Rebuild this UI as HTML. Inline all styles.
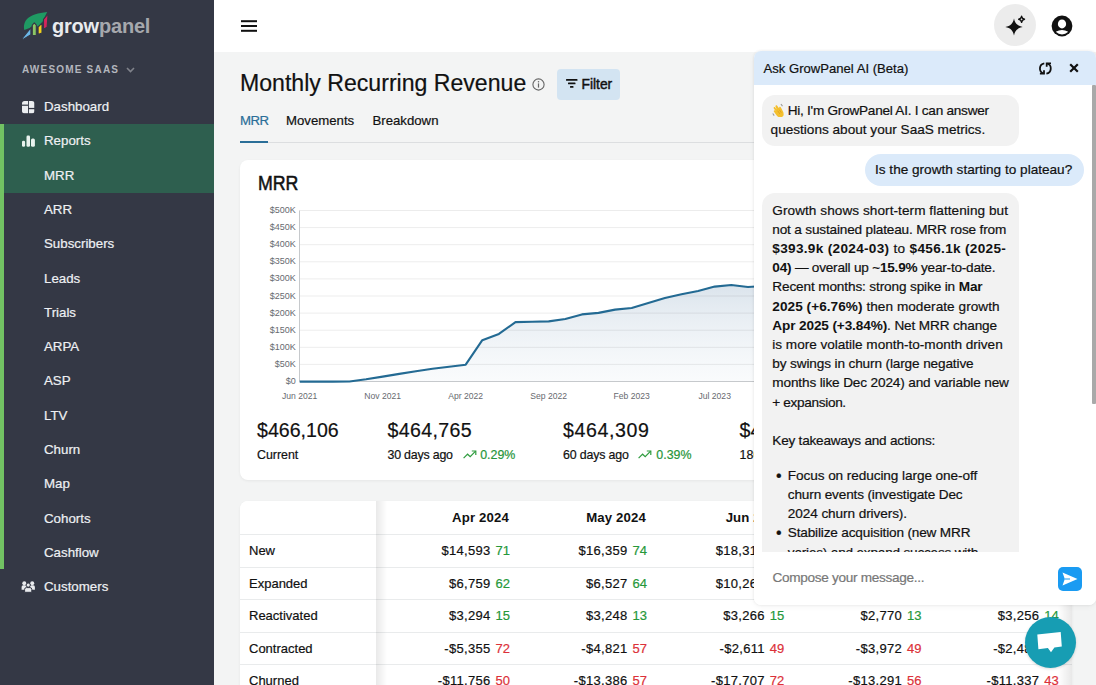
<!DOCTYPE html>
<html><head><meta charset="utf-8">
<style>
*{box-sizing:border-box;margin:0;padding:0}
body *{-webkit-text-stroke:0.2px currentColor}
b,.tbl .hd,#side .brand,#side .brand span,#side .org{-webkit-text-stroke:0}
html,body{width:1096px;height:685px;overflow:hidden;background:#f3f4f4;font-family:"Liberation Sans",sans-serif;color:#111}
.abs{position:absolute}
#side{position:absolute;left:0;top:0;width:214px;height:685px;background:#343845}
#side .logo{position:absolute;left:18px;top:8px}
#side .brand{position:absolute;left:52px;top:14.5px;font-size:20px;font-weight:bold;letter-spacing:-0.2px;color:#e9ebee}
#side .brand span{color:#a6a8ad}
#side .org{position:absolute;left:22px;top:63.5px;font-size:10px;font-weight:bold;letter-spacing:1.2px;color:#b3b6bd;width:180px}
#side .org svg{position:absolute;left:103.5px;top:3px}
.nav{position:absolute;left:0;width:214px;height:34.3px;font-size:13.3px;color:#eef0f3;line-height:34.3px}
.nav .t{position:absolute;left:44px;top:0}
.nav svg{position:absolute;left:22px;top:11px}
.nav.g{background:#2e5f4f}
#bar{position:absolute;left:0;top:124px;width:4px;height:445px;background:#72c263}
#hdr{position:absolute;left:214px;top:0;width:882px;height:52px;background:#fff}

#hdr .ham{position:absolute;left:26.5px;top:20px}
#hdr .spark{position:absolute;left:779.5px;top:4px;width:42px;height:42px;border-radius:50%;background:#ececec}
#hdr .spark svg{position:absolute;left:0;top:0}
#hdr .av{position:absolute;left:836.5px;top:14.5px}
.title{position:absolute;left:240px;top:70px;font-size:23.1px;color:#111;white-space:nowrap}
.info{position:absolute;left:531.5px;top:78px}
.filter{position:absolute;left:557px;top:69px;width:63px;height:31px;border-radius:4px;background:#d3e4f2;font-size:13.8px;color:#111}
.filter svg{position:absolute;left:8.5px;top:10px}
.filter span{position:absolute;left:24.5px;top:7.5px;-webkit-text-stroke:0.45px #111}
.tabs{position:absolute;left:240px;top:142px;width:832px;height:1.3px;background:#dcdee0}
.tab{position:absolute;top:113px;font-size:13.2px;color:#111;white-space:nowrap}
.tabline{position:absolute;left:240px;top:140.6px;width:28.3px;height:2.6px;background:#2a6e98}
.card{position:absolute;background:#fff;border-radius:8px;box-shadow:0 1px 3px rgba(0,0,0,0.06)}

.ctitle{position:absolute;left:258px;top:172.3px;font-size:19.5px;color:#111;-webkit-text-stroke:0.5px #111;transform:scaleX(0.91);transform-origin:0 0}
.stat{position:absolute;white-space:nowrap}
.stat .v{position:absolute;left:0;top:0;font-size:19.6px;color:#111}
.stat .l{position:absolute;left:0;top:28.5px;font-size:12.4px;color:#111}
.stat .p{position:absolute;top:28.5px;font-size:12.4px;color:#27963a}
.stat svg{position:absolute;top:28px}

.tbl{position:absolute;left:240px;top:501px;width:832px;height:200px;background:#fff;border-radius:8px;overflow:hidden;box-shadow:0 1px 3px rgba(0,0,0,0.06)}
.tbl .rl{position:absolute;left:0;width:832px;height:1px;background:#e9ebec}
.tbl .lab{position:absolute;left:9px;font-size:13px;color:#111}
.tbl .hd{position:absolute;font-size:13.2px;font-weight:bold;color:#111;text-align:right;width:120px;letter-spacing:0.15px}
.tbl .cell{position:absolute;width:130px;text-align:right;font-size:13px;color:#111;white-space:nowrap;letter-spacing:0.3px}
.tbl .cell span{margin-left:5px;letter-spacing:0}
.tbl .num{position:absolute;font-size:13px;color:#111;text-align:right;width:100px}
.tbl .cnt{position:absolute;font-size:13px;text-align:right;width:30px}
.tbl .sticky{position:absolute;left:0;top:0;width:136px;height:200px;background:#fff}
.tbl .shd{position:absolute;left:136px;top:0;width:11px;height:200px;background:linear-gradient(to right,rgba(0,0,0,0.085),rgba(0,0,0,0))}
.tbl .rshd{position:absolute;left:818px;top:0;width:14px;height:200px;background:linear-gradient(to left,rgba(0,0,0,0.09),rgba(0,0,0,0))}
.G{color:#26983a}.R{color:#dc3139}

#chat{position:absolute;left:753.5px;top:51px;width:342.5px;height:554px;background:#fff;border-radius:7px;box-shadow:0 0 3px rgba(0,0,0,0.09),0 2px 6px rgba(0,0,0,0.04);overflow:hidden}
#chat .hd{position:absolute;left:0;top:0;width:342px;height:34px;background:#dbeafa}
#chat .hd .t{position:absolute;left:10px;top:9.5px;font-size:13.1px;color:#111}
#chat .msgs{position:absolute;left:0;top:34px;width:342px;height:467px;overflow:hidden}
#chat .sb{position:absolute;left:338.5px;top:34px;width:3.5px;height:319px;background:#a9a9a9;border-radius:1px}
.bub{position:absolute;background:#f2f2f2;border-radius:13px;font-size:13.6px;line-height:19.2px;color:#111}
.bub b{font-weight:bold}
#chat .inp{position:absolute;left:0;top:501px;width:342px;height:53px;background:#fff}
#chat .inp .ph{position:absolute;left:19px;top:17.5px;font-size:13.6px;color:#777;letter-spacing:-0.3px}
#chat .send{position:absolute;left:304px;top:14.6px;width:24px;height:24.5px;border-radius:5px;background:#1a9bf2}
#fab{position:absolute;left:1024.5px;top:616.6px;width:51.2px;height:51.2px;border-radius:50%;background:#179db3;box-shadow:0 1px 3px rgba(0,0,0,0.15)}
</style></head><body>
<div id="side">
  <svg class="logo" width="40" height="36" viewBox="0 0 40 36">
    <path d="M6.3,22 C4.6,12.5 10.5,5.8 29.2,4 L25.5,11.3 L24,15 L20.1,19 L18.3,17.1 L16.3,14.8 L14.3,17.1 L12.9,19.6 Z" fill="#1f9a63"/>
    <g stroke="#343845" stroke-width="1.1" stroke-linejoin="round">
    <path d="M3.8,30.8 L12.9,19.6 L12.9,26.7 L5,31.4 Z" fill="#6cb8e8"/>
    <path d="M14.3,17.1 L16.3,14.8 L18.3,17.1 L18.3,27.5 L14.3,27.5 Z" fill="#8cc665"/>
    <path d="M20.1,19 L24,15 L24,24.9 L20.1,26.5 Z" fill="#f2d21b"/>
    <path d="M25.5,11.3 L30.1,6 L29.1,19.2 L25.5,21.2 Z" fill="#d6245e"/>
    </g>
  </svg>
  <div class="brand">grow<span>panel</span></div>
  <div class="org">AWESOME SAAS<svg width="9" height="6" viewBox="0 0 9 6"><path d="M1,1 L4.5,4.5 L8,1" stroke="#80838b" stroke-width="1.6" fill="none"/></svg></div>
    <div class="nav" style="top:90.0px"><svg style="left:21.9px;top:10.8px" width="13" height="13" viewBox="0 0 13 13"><defs><clipPath id="dbc"><rect x="0" y="0" width="12.5" height="12.4" rx="2.6"/></clipPath></defs><g clip-path="url(#dbc)" fill="#eceef1"><rect x="0" y="0" width="6" height="3.6"/><rect x="0" y="4.8" width="6" height="7.6"/><rect x="6.9" y="0" width="5.6" height="6.9"/><rect x="6.9" y="8.2" width="5.6" height="4.2"/></g></svg><span class="t">Dashboard</span></div>
  <div class="nav g" style="top:124.3px"><svg width="13" height="13" viewBox="0 0 13 13"><rect x="0" y="5.8" width="3.1" height="6" rx="1.3" fill="#e9f2ee"/><rect x="4.5" y="0.6" width="3.5" height="11.2" rx="1.3" fill="#e9f2ee"/><rect x="9" y="3.6" width="3.9" height="8.2" rx="1.5" fill="#e9f2ee"/></svg><span class="t">Reports</span></div>
  <div class="nav g" style="top:158.6px"><span class="t">MRR</span></div>
  <div class="nav" style="top:192.9px"><span class="t">ARR</span></div>
  <div class="nav" style="top:227.2px"><span class="t">Subscribers</span></div>
  <div class="nav" style="top:261.5px"><span class="t">Leads</span></div>
  <div class="nav" style="top:295.8px"><span class="t">Trials</span></div>
  <div class="nav" style="top:330.1px"><span class="t">ARPA</span></div>
  <div class="nav" style="top:364.4px"><span class="t">ASP</span></div>
  <div class="nav" style="top:398.7px"><span class="t">LTV</span></div>
  <div class="nav" style="top:433.0px"><span class="t">Churn</span></div>
  <div class="nav" style="top:467.3px"><span class="t">Map</span></div>
  <div class="nav" style="top:501.6px"><span class="t">Cohorts</span></div>
  <div class="nav" style="top:535.9px"><span class="t">Cashflow</span></div>
  <div class="nav" style="top:570.2px"><svg style="left:21px;top:11px" width="16" height="13" viewBox="0 0 16 13"><g fill="#e9ebee"><circle cx="3.3" cy="2.2" r="2"/><path d="M0.6,8.7 L0.6,6 Q0.6,4.3 2.3,4.3 L4.4,4.3 Q6,4.3 6,6 L6,8.7 Z"/><circle cx="11.2" cy="2.2" r="2"/><path d="M8.6,8.7 L8.6,6 Q8.6,4.3 10.2,4.3 L12.3,4.3 Q13.9,4.3 13.9,6 L13.9,8.7 Z"/></g><g fill="#e9ebee" stroke="#343845" stroke-width="1"><circle cx="7.2" cy="4.1" r="2.1"/><path d="M3.6,11.3 L3.6,8.4 Q3.6,6.6 5.4,6.6 L9,6.6 Q10.8,6.6 10.8,8.4 L10.8,11.3 Z"/></g></svg><span class="t">Customers</span></div>
  <div id="bar"></div>
</div>
<div id="hdr">
  <svg class="ham" width="16" height="12" viewBox="0 0 16 12"><rect x="0" y="0.2" width="16" height="2" fill="#111"/><rect x="0" y="5" width="16" height="2" fill="#111"/><rect x="0" y="9.8" width="16" height="2" fill="#111"/></svg>
  <div class="spark"><svg width="42" height="42" viewBox="0 0 42 42"><path d="M20,14.4 C21,19.2 23.4,21.9 28.7,22.9 C23.4,23.9 21,26.6 20,31.4 C19,26.6 16.6,23.9 11.3,22.9 C16.6,21.9 19,19.2 20,14.4 Z" fill="#111"/><path d="M27.6,12.3 C27.9,14.1 28.5,14.8 30.5,15.3 C28.5,15.8 27.9,16.5 27.6,18.3 C27.3,16.5 26.7,15.8 24.7,15.3 C26.7,14.8 27.3,14.1 27.6,12.3 Z" fill="none" stroke="#111" stroke-width="1.4" stroke-linejoin="round"/></svg></div>
  <svg class="av" width="22" height="22" viewBox="0 0 22 22"><defs><clipPath id="avc"><circle cx="11" cy="11" r="8.4"/></clipPath></defs><circle cx="11" cy="11" r="10.4" fill="#111"/><g clip-path="url(#avc)"><ellipse cx="11" cy="8.9" rx="4.1" ry="4.5" fill="#fff"/><ellipse cx="11" cy="20.2" rx="8" ry="5.2" fill="#fff"/></g></svg>
</div>
<div class="title">Monthly Recurring Revenue</div>
<svg class="info" width="13" height="13" viewBox="0 0 13 13"><circle cx="6.5" cy="6.5" r="5.6" fill="none" stroke="#666" stroke-width="1.1"/><rect x="5.9" y="5.4" width="1.2" height="4.2" fill="#666"/><circle cx="6.5" cy="3.8" r="0.75" fill="#666"/></svg>
<div class="filter"><svg width="12" height="9" viewBox="0 0 12 9"><rect x="0" y="0" width="11.5" height="1.8" rx="0.6" fill="#111"/><rect x="2" y="3.5" width="7.5" height="1.8" rx="0.6" fill="#111"/><rect x="4" y="7" width="3.5" height="1.8" rx="0.6" fill="#111"/></svg><span>Filter</span></div>
<div class="tabs"></div>
<div class="tab" style="left:240px;color:#2a6e98;letter-spacing:-0.55px">MRR</div>
<div class="tab" style="left:286px">Movements</div>
<div class="tab" style="left:372.5px">Breakdown</div>
<div class="tabline"></div>
<div class="card" style="left:240px;top:160px;width:832px;height:320px"></div>
<div class="ctitle">MRR</div>
<svg class="abs" style="left:0;top:0" width="1096" height="685" viewBox="0 0 1096 685">
<defs><linearGradient id="ag" x1="0" y1="0" x2="0" y2="1"><stop offset="0" stop-color="#cbd8e4" stop-opacity="0.75"/><stop offset="1" stop-color="#edf2f6" stop-opacity="0.3"/></linearGradient>
<clipPath id="cc"><rect x="240" y="160" width="832" height="320"/></clipPath></defs>
<g clip-path="url(#cc)">
<path d="M299.7,382.1 L316.3,381.9 L332.9,381.7 L349.5,381.5 L366.1,379.3 L382.7,376.6 L399.3,373.9 L415.9,371.3 L432.5,368.7 L449.1,366.7 L465.7,364.7 L482.3,340.2 L498.9,333.9 L515.5,322.1 L532.1,321.8 L548.7,321.4 L565.3,319.0 L581.9,314.4 L598.5,312.9 L615.1,309.6 L631.7,308.0 L648.3,303.0 L664.9,298.0 L681.5,294.3 L698.1,291.0 L714.7,286.6 L731.3,285.0 L747.9,287.0 L764.5,285.9 L781.1,283.8 L797.7,281.3 L814.3,278.3 L814.3,381.5 L299.7,381.5 Z" fill="url(#ag)"/>
<line x1="299.5" y1="381.50" x2="1060" y2="381.50" stroke="#c6c9cc" stroke-width="1.2"/><line x1="299.5" y1="364.40" x2="1060" y2="364.40" stroke="rgba(0,0,0,0.075)" stroke-width="1"/><line x1="299.5" y1="347.30" x2="1060" y2="347.30" stroke="rgba(0,0,0,0.075)" stroke-width="1"/><line x1="299.5" y1="330.20" x2="1060" y2="330.20" stroke="rgba(0,0,0,0.075)" stroke-width="1"/><line x1="299.5" y1="313.10" x2="1060" y2="313.10" stroke="rgba(0,0,0,0.075)" stroke-width="1"/><line x1="299.5" y1="296.00" x2="1060" y2="296.00" stroke="rgba(0,0,0,0.075)" stroke-width="1"/><line x1="299.5" y1="278.90" x2="1060" y2="278.90" stroke="rgba(0,0,0,0.075)" stroke-width="1"/><line x1="299.5" y1="261.80" x2="1060" y2="261.80" stroke="rgba(0,0,0,0.075)" stroke-width="1"/><line x1="299.5" y1="244.70" x2="1060" y2="244.70" stroke="rgba(0,0,0,0.075)" stroke-width="1"/><line x1="299.5" y1="227.60" x2="1060" y2="227.60" stroke="rgba(0,0,0,0.075)" stroke-width="1"/><line x1="299.5" y1="210.50" x2="1060" y2="210.50" stroke="rgba(0,0,0,0.075)" stroke-width="1"/>
<line x1="299.5" y1="210.5" x2="299.5" y2="381.5" stroke="#c6c9cc" stroke-width="1"/>
<polyline points="299.7,381.6 316.3,381.6 332.9,381.6 349.5,381.5 366.1,379.3 382.7,376.6 399.3,373.9 415.9,371.3 432.5,368.7 449.1,366.7 465.7,364.7 482.3,340.2 498.9,333.9 515.5,322.1 532.1,321.8 548.7,321.4 565.3,319.0 581.9,314.4 598.5,312.9 615.1,309.6 631.7,308.0 648.3,303.0 664.9,298.0 681.5,294.3 698.1,291.0 714.7,286.6 731.3,285.0 747.9,287.0 764.5,285.9 781.1,283.8 797.7,281.3 814.3,278.3" fill="none" stroke="#236a93" stroke-width="2.1" stroke-linejoin="round"/>
<g font-family="Liberation Sans" font-size="8.6" fill="#676a6f"><text x="295.8" y="384.00" text-anchor="end" font-size="9">$0</text><text x="295.8" y="366.90" text-anchor="end" font-size="9">$50K</text><text x="295.8" y="349.80" text-anchor="end" font-size="9">$100K</text><text x="295.8" y="332.70" text-anchor="end" font-size="9">$150K</text><text x="295.8" y="315.60" text-anchor="end" font-size="9">$200K</text><text x="295.8" y="298.50" text-anchor="end" font-size="9">$250K</text><text x="295.8" y="281.40" text-anchor="end" font-size="9">$300K</text><text x="295.8" y="264.30" text-anchor="end" font-size="9">$350K</text><text x="295.8" y="247.20" text-anchor="end" font-size="9">$400K</text><text x="295.8" y="230.10" text-anchor="end" font-size="9">$450K</text><text x="295.8" y="213.00" text-anchor="end" font-size="9">$500K</text><text x="299.7" y="399.2" text-anchor="middle">Jun 2021</text><text x="382.7" y="399.2" text-anchor="middle">Nov 2021</text><text x="465.7" y="399.2" text-anchor="middle">Apr 2022</text><text x="548.7" y="399.2" text-anchor="middle">Sep 2022</text><text x="631.7" y="399.2" text-anchor="middle">Feb 2023</text><text x="714.7" y="399.2" text-anchor="middle">Jul 2023</text><text x="797.7" y="399.2" text-anchor="middle">Dec 2023</text></g>
</g></svg>
<div class="stat" style="left:257px;top:419px"><div class="v">$466,106</div><div class="l">Current</div></div>
<div class="stat" style="left:387.5px;top:419px"><div class="v" style="letter-spacing:0.33px">$464,765</div><div class="l" style="letter-spacing:-0.2px">30 days ago</div><span style="position:absolute;left:75px;top:0"><svg style="position:absolute;left:0;top:30.5px" width="14" height="9" viewBox="0 0 14 9"><polyline points="0.6,8.2 4.6,4.2 7.2,6.6 12.6,1.2" fill="none" stroke="#2e9c3e" stroke-width="1.2"/><polyline points="8.8,1 12.8,1 12.8,5" fill="none" stroke="#2e9c3e" stroke-width="1.2"/></svg></span><div class="p" style="left:92.7px">0.29%</div></div>
<div class="stat" style="left:563px;top:419px"><div class="v" style="letter-spacing:0.58px">$464,309</div><div class="l" style="letter-spacing:-0.17px">60 days ago</div><span style="position:absolute;left:75px;top:0"><svg style="position:absolute;left:0;top:30.5px" width="14" height="9" viewBox="0 0 14 9"><polyline points="0.6,8.2 4.6,4.2 7.2,6.6 12.6,1.2" fill="none" stroke="#2e9c3e" stroke-width="1.2"/><polyline points="8.8,1 12.8,1 12.8,5" fill="none" stroke="#2e9c3e" stroke-width="1.2"/></svg></span><div class="p" style="left:93.3px">0.39%</div></div>
<div class="stat" style="left:739.6px;top:419px"><div class="v">$464,200</div><div class="l">180 days ago</div></div>
<div class="tbl">
<div class="rl" style="top:32.9px"></div>
<div class="rl" style="top:66.0px"></div>
<div class="rl" style="top:98.3px"></div>
<div class="rl" style="top:130.8px"></div>
<div class="rl" style="top:163.3px"></div>
<div class="hd" style="left:149.0px;top:9.0px">Apr 2024</div>
<div class="hd" style="left:286.0px;top:9.0px">May 2024</div>
<div class="hd" style="left:423.3px;top:9.0px">Jun 2024</div>
<div class="hd" style="left:560.5px;top:9.0px">Jul 2024</div>
<div class="hd" style="left:697.8px;top:9.0px">Aug 2024</div>
<div class="cell" style="left:140.0px;top:41.7px">$14,593<span class="G">71</span></div>
<div class="cell" style="left:277.0px;top:41.7px">$16,359<span class="G">74</span></div>
<div class="cell" style="left:414.3px;top:41.7px">$18,312<span class="G">81</span></div>
<div class="cell" style="left:551.5px;top:41.7px">$15,204<span class="G">66</span></div>
<div class="cell" style="left:688.8px;top:41.7px">$17,118<span class="G">70</span></div>
<div class="cell" style="left:140.0px;top:74.8px">$6,759<span class="G">62</span></div>
<div class="cell" style="left:277.0px;top:74.8px">$6,527<span class="G">64</span></div>
<div class="cell" style="left:414.3px;top:74.8px">$10,260<span class="G">70</span></div>
<div class="cell" style="left:551.5px;top:74.8px">$7,412<span class="G">58</span></div>
<div class="cell" style="left:688.8px;top:74.8px">$8,095<span class="G">61</span></div>
<div class="cell" style="left:140.0px;top:107.1px">$3,294<span class="G">15</span></div>
<div class="cell" style="left:277.0px;top:107.1px">$3,248<span class="G">13</span></div>
<div class="cell" style="left:414.3px;top:107.1px">$3,266<span class="G">15</span></div>
<div class="cell" style="left:551.5px;top:107.1px">$2,770<span class="G">13</span></div>
<div class="cell" style="left:688.8px;top:107.1px">$3,256<span class="G">14</span></div>
<div class="cell" style="left:140.0px;top:139.6px">-$5,355<span class="R">72</span></div>
<div class="cell" style="left:277.0px;top:139.6px">-$4,821<span class="R">57</span></div>
<div class="cell" style="left:414.3px;top:139.6px">-$2,611<span class="R">49</span></div>
<div class="cell" style="left:551.5px;top:139.6px">-$3,972<span class="R">49</span></div>
<div class="cell" style="left:688.8px;top:139.6px">-$2,482<span class="R">51</span></div>
<div class="cell" style="left:140.0px;top:172.1px">-$11,756<span class="R">50</span></div>
<div class="cell" style="left:277.0px;top:172.1px">-$13,386<span class="R">57</span></div>
<div class="cell" style="left:414.3px;top:172.1px">-$17,707<span class="R">72</span></div>
<div class="cell" style="left:551.5px;top:172.1px">-$13,291<span class="R">56</span></div>
<div class="cell" style="left:688.8px;top:172.1px">-$11,337<span class="R">43</span></div>
<div class="rshd"></div><div class="sticky"></div><div class="shd"></div>
<div class="rl" style="top:32.9px;width:136px"></div>
<div class="rl" style="top:66.0px;width:136px"></div>
<div class="rl" style="top:98.3px;width:136px"></div>
<div class="rl" style="top:130.8px;width:136px"></div>
<div class="rl" style="top:163.3px;width:136px"></div>
<div class="lab" style="top:41.7px">New</div>
<div class="lab" style="top:74.8px">Expanded</div>
<div class="lab" style="top:107.1px">Reactivated</div>
<div class="lab" style="top:139.6px">Contracted</div>
<div class="lab" style="top:172.1px">Churned</div>
</div>
<div id="chat">
 <div class="hd"><div class="t">Ask GrowPanel AI (Beta)</div>
  <svg style="position:absolute;left:284px;top:9.5px" width="15" height="15" viewBox="0 0 15 15"><path d="M6.3,2.4 A5.2,5.2 0 0 0 5.6,12.5" fill="none" stroke="#111" stroke-width="1.8"/><path d="M1.9,12.6 L6,12.6 L6,9.2" fill="none" stroke="#111" stroke-width="1.8"/><path d="M8.4,12.6 A5.2,5.2 0 0 0 9.1,2.5" fill="none" stroke="#111" stroke-width="1.8"/><path d="M13,2.3 L8.7,2.3 L8.7,5.8" fill="none" stroke="#111" stroke-width="1.8"/></svg>
  <svg style="position:absolute;left:315.5px;top:11.5px" width="10" height="10" viewBox="0 0 10 10"><path d="M1.2,1.2 L8.8,8.8 M8.8,1.2 L1.2,8.8" stroke="#111" stroke-width="2.2"/></svg>
 </div>
 <div class="msgs">
  <div class="bub" style="left:8.5px;top:10px;width:257px;height:51px;padding:5.6px 0 0 8.6px"><svg style="display:inline-block;vertical-align:-2.5px;margin-left:1px;margin-right:2.6px;-webkit-text-stroke:0" width="13.5" height="14.5" viewBox="0 0 13 14"><path d="M3.4,3.6 C2.9,2.4 4.3,1.7 5,2.7 L6.9,5.3 C6.5,3.6 7.9,3.1 8.6,4.3 L10.6,8.3 C11.9,11 11.1,13.3 8.8,13.8 C7,14.2 5.3,13.3 4.3,11.9 L1.9,8.5 C1.2,7.4 2.4,6.6 3.2,7.5 L3.9,8.3 L1.7,5.2 C1.1,4.2 2.3,3.4 3.1,4.3 L4.6,6.3 Z" fill="#f4bf2e"/><path d="M5.5,7.5 L7.6,10.6 M7.2,6.6 L9,9.4" stroke="#dc9b16" stroke-width="0.7" fill="none"/><path d="M8.6,0.9 L10.1,3" stroke="#9a9a9a" stroke-width="1" fill="none"/><path d="M0.7,10.2 L2.1,12.2" stroke="#9a9a9a" stroke-width="1" fill="none"/></svg><span style="letter-spacing:-0.25px">Hi, I'm GrowPanel AI. I can answer</span><br>questions about your SaaS metrics.</div>
  <div class="bub" style="left:111.5px;top:68.5px;width:218.5px;height:32.5px;background:#dbeafa;border-radius:16px;padding:6.5px 0 0 10px">Is the growth starting to plateau?</div>
  <div class="bub" style="left:8.8px;top:107.5px;width:257px;height:600px;padding:8px 0 0 10px"><span class="ln" id="L0" style="letter-spacing:0.061px">Growth shows short-term flattening but</span><br><span class="ln" id="L1" style="letter-spacing:-0.170px">not a sustained plateau. MRR rose from</span><br><span class="ln" id="L2" style="letter-spacing:0.310px"><b>$393.9k (2024-03)</b> to <b>$456.1k (2025-</b></span><br><span class="ln" id="L3" style="letter-spacing:-0.213px"><b>04)</b> &#8212; overall up ~<b>15.9%</b> year-to-date.</span><br><span class="ln" id="L4" style="letter-spacing:-0.129px">Recent months: strong spike in <b>Mar</b></span><br><span class="ln" id="L5" style="letter-spacing:0.053px"><b>2025 (+6.76%)</b> then moderate growth</span><br><span class="ln" id="L6" style="letter-spacing:-0.117px"><b>Apr 2025 (+3.84%)</b>. Net MRR change</span><br><span class="ln" id="L7" style="letter-spacing:-0.021px">is more volatile month-to-month driven</span><br><span class="ln" id="L8" style="letter-spacing:-0.127px">by swings in churn (large negative</span><br><span class="ln" id="L9" style="letter-spacing:-0.140px">months like Dec 2024) and variable new</span><br><span class="ln" id="L10" style="letter-spacing:-0.330px">+ expansion.</span><br><br><span class="ln" id="L12" style="letter-spacing:-0.220px">Key takeaways and actions:</span><br><div style="height:15.7px"></div><ul style="list-style:none;margin:0;padding:0"><li style="position:relative;padding-left:15.5px"><span style="position:absolute;left:3.8px;top:0;font-size:16px">&#8226;</span><span class="ln" id="B0" style="letter-spacing:-0.077px">Focus on reducing large one-off</span><br><span class="ln" id="B1" style="letter-spacing:-0.151px">churn events (investigate Dec</span><br><span class="ln" id="B2" style="letter-spacing:-0.084px">2024 churn drivers).</span></li><li style="position:relative;padding-left:15.5px"><span style="position:absolute;left:3.8px;top:0;font-size:16px">&#8226;</span><span class="ln" id="B3" style="letter-spacing:-0.162px">Stabilize acquisition (new MRR</span><br><span class="ln" id="B4" style="letter-spacing:-0.198px">varies) and expand success with</span></li></ul></div>
 </div>
 <div class="sb"></div>
 <div class="inp"><div class="ph">Compose your message...</div>
  <div class="send"><svg style="position:absolute;left:3px;top:4px" width="18" height="16" viewBox="0 0 18 16"><path d="M1.5,1.5 L16.5,8 L1.5,14.5 L3.8,8 Z" fill="#fff"/><path d="M3.8,8 L9,8" stroke="#1a9bf2" stroke-width="1.2"/></svg></div>
 </div>
</div>
<div id="fab"><svg style="position:absolute;left:12.5px;top:14.5px" width="26" height="22" viewBox="0 0 26 22"><path d="M0.3,3.4 L23.7,0.9 L24.8,15.6 L17.4,16.4 L14,21.3 L10.9,17.1 L1.4,18.3 Z" fill="#fff"/></svg></div>
</body></html>
